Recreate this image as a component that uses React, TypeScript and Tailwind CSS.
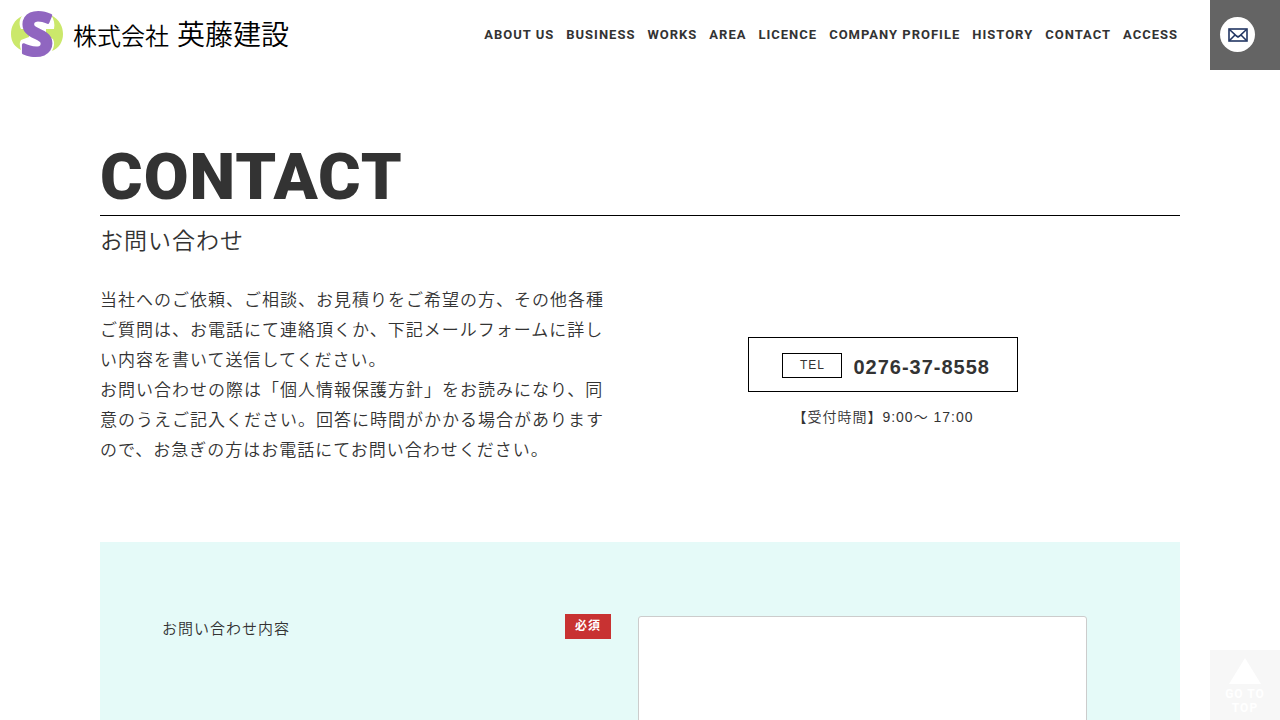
const NAV = [
  "ABOUT US",
  "BUSINESS",
  "WORKS",
  "AREA",
  "LICENCE",
  "COMPANY PROFILE",
  "HISTORY",
  "CONTACT",
  "ACCESS",
];

function LogoMark() {
  return (
    <svg width="54" height="68" viewBox="0 0 54 68" className="overflow-visible" aria-hidden="true">
      <path d="M12 16 C4 20 1 27 1 34 C1 42 5 47 11 50 C10 46 9 43 11 40 L19 37 V29 H11 C9 25 9 20 12 16Z" fill="#cbe86b" />
      <path d="M41 15 C50 20 53 27 53 34 C53 42 49 48 42 51 C44 47 45 43 43 39 L36 36 V29 H44 C45 24 44 19 41 15Z" fill="#cbe86b" />
      <text
        x="27"
        y="55"
        textAnchor="middle"
        fontSize="59"
        fontWeight="700"
        fill="#9066c0"
        stroke="#9066c0"
        strokeWidth="3"
        strokeLinejoin="round"
        className="font-['Open_Sans',sans-serif] tracking-normal"
      >
        S
      </text>
    </svg>
  );
}

function MailIcon() {
  return (
    <svg width="20" height="14" viewBox="0 0 20 14" fill="none" stroke="#223663" strokeWidth="1.6" aria-hidden="true">
      <rect x="1" y="1" width="18" height="12" />
      <path d="M1.5 1.5 L8.5 8 L10 9 L11.5 8 L18.5 1.5 M1.5 12.5 L7 7 M18.5 12.5 L13 7" />
    </svg>
  );
}

export default function App() {
  return (
    <div lang="ja" className="min-h-screen bg-white font-['Liberation_Sans','Noto_Sans_CJK_JP',sans-serif] font-[350] tracking-[1px] text-[#333333]">
      <header className="flex h-[70px] items-center">
        <a href="#" className="ml-[10px] flex h-[68px] items-center self-start text-black">
          <LogoMark />
          <span className="ml-[9px] flex items-baseline gap-2 font-['Noto_Sans_CJK_JP',sans-serif] leading-10 tracking-normal">
            <span className="text-[24px]">株式会社</span>
            <span className="text-[28px]">英藤建設</span>
          </span>
        </a>
        <nav className="mr-8 ml-auto">
          <ul className="flex gap-3 font-['Roboto',sans-serif] text-[13px] font-bold whitespace-nowrap">
            {NAV.map((item) => (
              <li key={item}>
                <a href="#">{item}</a>
              </li>
            ))}
          </ul>
        </nav>
        <div className="flex h-full w-[70px] items-start bg-[#646464] pt-[17px] pl-[10px]">
          <a href="#" aria-label="お問い合わせ" className="flex size-[35px] items-center justify-center rounded-full bg-white">
            <MailIcon />
          </a>
        </div>
      </header>

      <main className="mx-[100px]">
        <h1 className="mt-[71px] border-b border-black pb-[2px] font-['Roboto',sans-serif] text-[65px] leading-[72px] font-black">
          CONTACT
        </h1>
        <p className="mt-[9px] text-[23px] leading-8">お問い合わせ</p>

        <section className="mt-[29px] flex items-center">
          <p className="w-[506px] text-[17px] leading-[30px]">
            当社へのご依頼、ご相談、お見積りをご希望の方、その他各種ご質問は、お電話にて連絡頂くか、下記メールフォームに詳しい内容を書いて送信してください。
            <br />
            お問い合わせの際は「個人情報保護方針」をお読みになり、同意のうえご記入ください。回答に時間がかかる場合がありますので、お急ぎの方はお電話にてお問い合わせください。
          </p>
          <div className="flex flex-1 flex-col items-center gap-3 pt-[14px] pr-[20px]">
            <a href="tel:0276-37-8558" className="flex h-[55px] w-[270px] items-center justify-end gap-[11px] border border-black pt-[2px] pr-[27px]">
              <span className="flex h-[25px] w-[60px] items-center justify-center border border-black text-[12px]">TEL</span>
              <span className="pt-1 text-[20px] font-bold">0276-37-8558</span>
            </a>
            <p className="text-[14px] leading-[26px]">【受付時間】9:00〜 17:00</p>
          </div>
        </section>

        <form className="mt-[76px] flex min-h-[400px] items-start bg-[#e5faf8] pt-[72px] pr-[93px] pl-[62px]">
          <label htmlFor="message" className="flex-1 text-[15px] leading-[30px]">
            お問い合わせ内容
          </label>
          <span className="mr-[27px] bg-[#c83232] px-[10px] text-[12px] leading-[25px] font-bold text-white">必須</span>
          <textarea id="message" className="mt-[2px] h-[200px] w-[449px] resize-none rounded-[3px] border border-[#cccccc] bg-white p-2" />
        </form>
      </main>

      <a
        href="#"
        className="fixed right-0 bottom-0 flex size-[70px] flex-col items-center bg-[#f7f7f7] pt-2 text-center font-['Roboto',sans-serif] text-[12px] leading-[14px] font-bold text-white"
      >
        <svg width="32" height="26" viewBox="0 0 32 26" fill="currentColor" aria-hidden="true">
          <path d="M16 0 L32 26 H0Z" />
        </svg>
        <span className="mt-[3px]">
          GO TO
          <br />
          TOP
        </span>
      </a>
    </div>
  );
}
